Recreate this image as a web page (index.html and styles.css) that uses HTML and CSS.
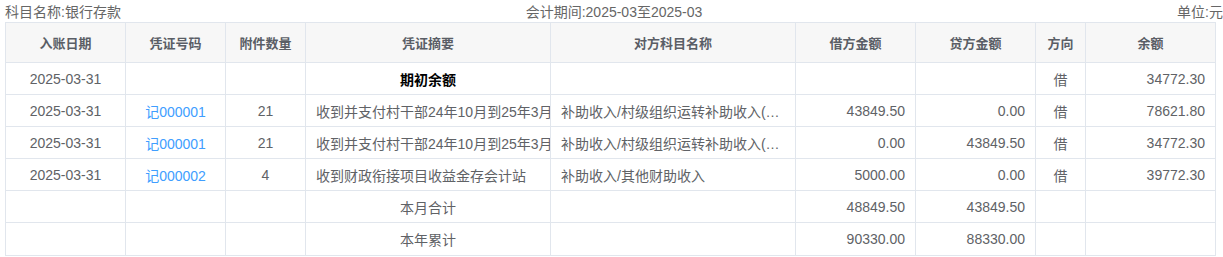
FILE: index.html
```html
<!DOCTYPE html>
<html lang="zh-CN">

<head>
    <meta charset="UTF-8">
    <title>明细账</title>
    <link rel="stylesheet" href="styles.css">
</head>

<body>
    <div class="ledger">
        <div class="info">
            <span class="info-left">科目名称:银行存款</span>
            <span class="info-mid">会计期间:2025-03至2025-03</span>
            <span class="info-right">单位:元</span>
        </div>
        <table class="grid">
            <colgroup>
                <col style="width: 120px">
                <col style="width: 100px">
                <col style="width: 80px">
                <col style="width: 245px">
                <col style="width: 245px">
                <col style="width: 120px">
                <col style="width: 120px">
                <col style="width: 50px">
                <col style="width: 130px">
            </colgroup>
            <thead>
                <tr>
                    <th>入账日期</th>
                    <th>凭证号码</th>
                    <th>附件数量</th>
                    <th>凭证摘要</th>
                    <th>对方科目名称</th>
                    <th>借方金额</th>
                    <th>贷方金额</th>
                    <th>方向</th>
                    <th>余额</th>
                </tr>
            </thead>
            <tbody>
                <tr>
                    <td class="c">2025-03-31</td>
                    <td></td>
                    <td></td>
                    <td class="c strong">期初余额</td>
                    <td></td>
                    <td></td>
                    <td></td>
                    <td class="c">借</td>
                    <td class="r">34772.30</td>
                </tr>
                <tr>
                    <td class="c">2025-03-31</td>
                    <td class="c"><a class="voucher" href="#">记000001</a></td>
                    <td class="c">21</td>
                    <td class="clip">收到并支付村干部24年10月到25年3月工资</td>
                    <td class="ellip">补助收入/村级组织运转补助收入(村干部报酬)</td>
                    <td class="r">43849.50</td>
                    <td class="r">0.00</td>
                    <td class="c">借</td>
                    <td class="r">78621.80</td>
                </tr>
                <tr>
                    <td class="c">2025-03-31</td>
                    <td class="c"><a class="voucher" href="#">记000001</a></td>
                    <td class="c">21</td>
                    <td class="clip">收到并支付村干部24年10月到25年3月工资</td>
                    <td class="ellip">补助收入/村级组织运转补助收入(村干部报酬)</td>
                    <td class="r">0.00</td>
                    <td class="r">43849.50</td>
                    <td class="c">借</td>
                    <td class="r">34772.30</td>
                </tr>
                <tr>
                    <td class="c">2025-03-31</td>
                    <td class="c"><a class="voucher" href="#">记000002</a></td>
                    <td class="c">4</td>
                    <td class="clip">收到财政衔接项目收益金存会计站</td>
                    <td class="ellip">补助收入/其他财助收入</td>
                    <td class="r">5000.00</td>
                    <td class="r">0.00</td>
                    <td class="c">借</td>
                    <td class="r">39772.30</td>
                </tr>
                <tr>
                    <td></td>
                    <td></td>
                    <td></td>
                    <td class="c">本月合计</td>
                    <td></td>
                    <td class="r">48849.50</td>
                    <td class="r">43849.50</td>
                    <td></td>
                    <td></td>
                </tr>
                <tr>
                    <td></td>
                    <td></td>
                    <td></td>
                    <td class="c">本年累计</td>
                    <td></td>
                    <td class="r">90330.00</td>
                    <td class="r">88330.00</td>
                    <td></td>
                    <td></td>
                </tr>
            </tbody>
        </table>
    </div>
</body>

</html>
```

FILE: styles.css
```css
body {
    margin: 0;
    background: #fff;
    font-family: "Liberation Sans", "Noto Sans CJK SC", sans-serif;
    font-size: 14px;
    color: #606266;
}

.ledger {
    padding-left: 5px;
}

.info {
    display: grid;
    grid-template-columns: 1fr auto 1fr;
    padding-top: 3px;
    line-height: 19px;
    color: #666;
}

.info-right {
    text-align: right;
}

.grid {
    width: 1210px;
    table-layout: fixed;
    border-collapse: collapse;
}

.grid th,
.grid td {
    border: 1px solid #e1e6ed;
    padding: 0 10px;
    white-space: nowrap;
    overflow: hidden;
}

.grid th {
    height: 39px;
    background: #f7f7f7;
    font-size: 13px;
    font-weight: bold;
    color: #5a5e66;
    text-align: center;
}

.grid td {
    height: 31.1px;
}

.c {
    text-align: center;
}

.r {
    text-align: right;
}

.clip {
    text-overflow: clip;
}

.ellip {
    text-overflow: ellipsis;
}

.strong {
    font-weight: bold;
    color: #000;
}

.voucher {
    color: #409eff;
    text-decoration: none;
}
```
